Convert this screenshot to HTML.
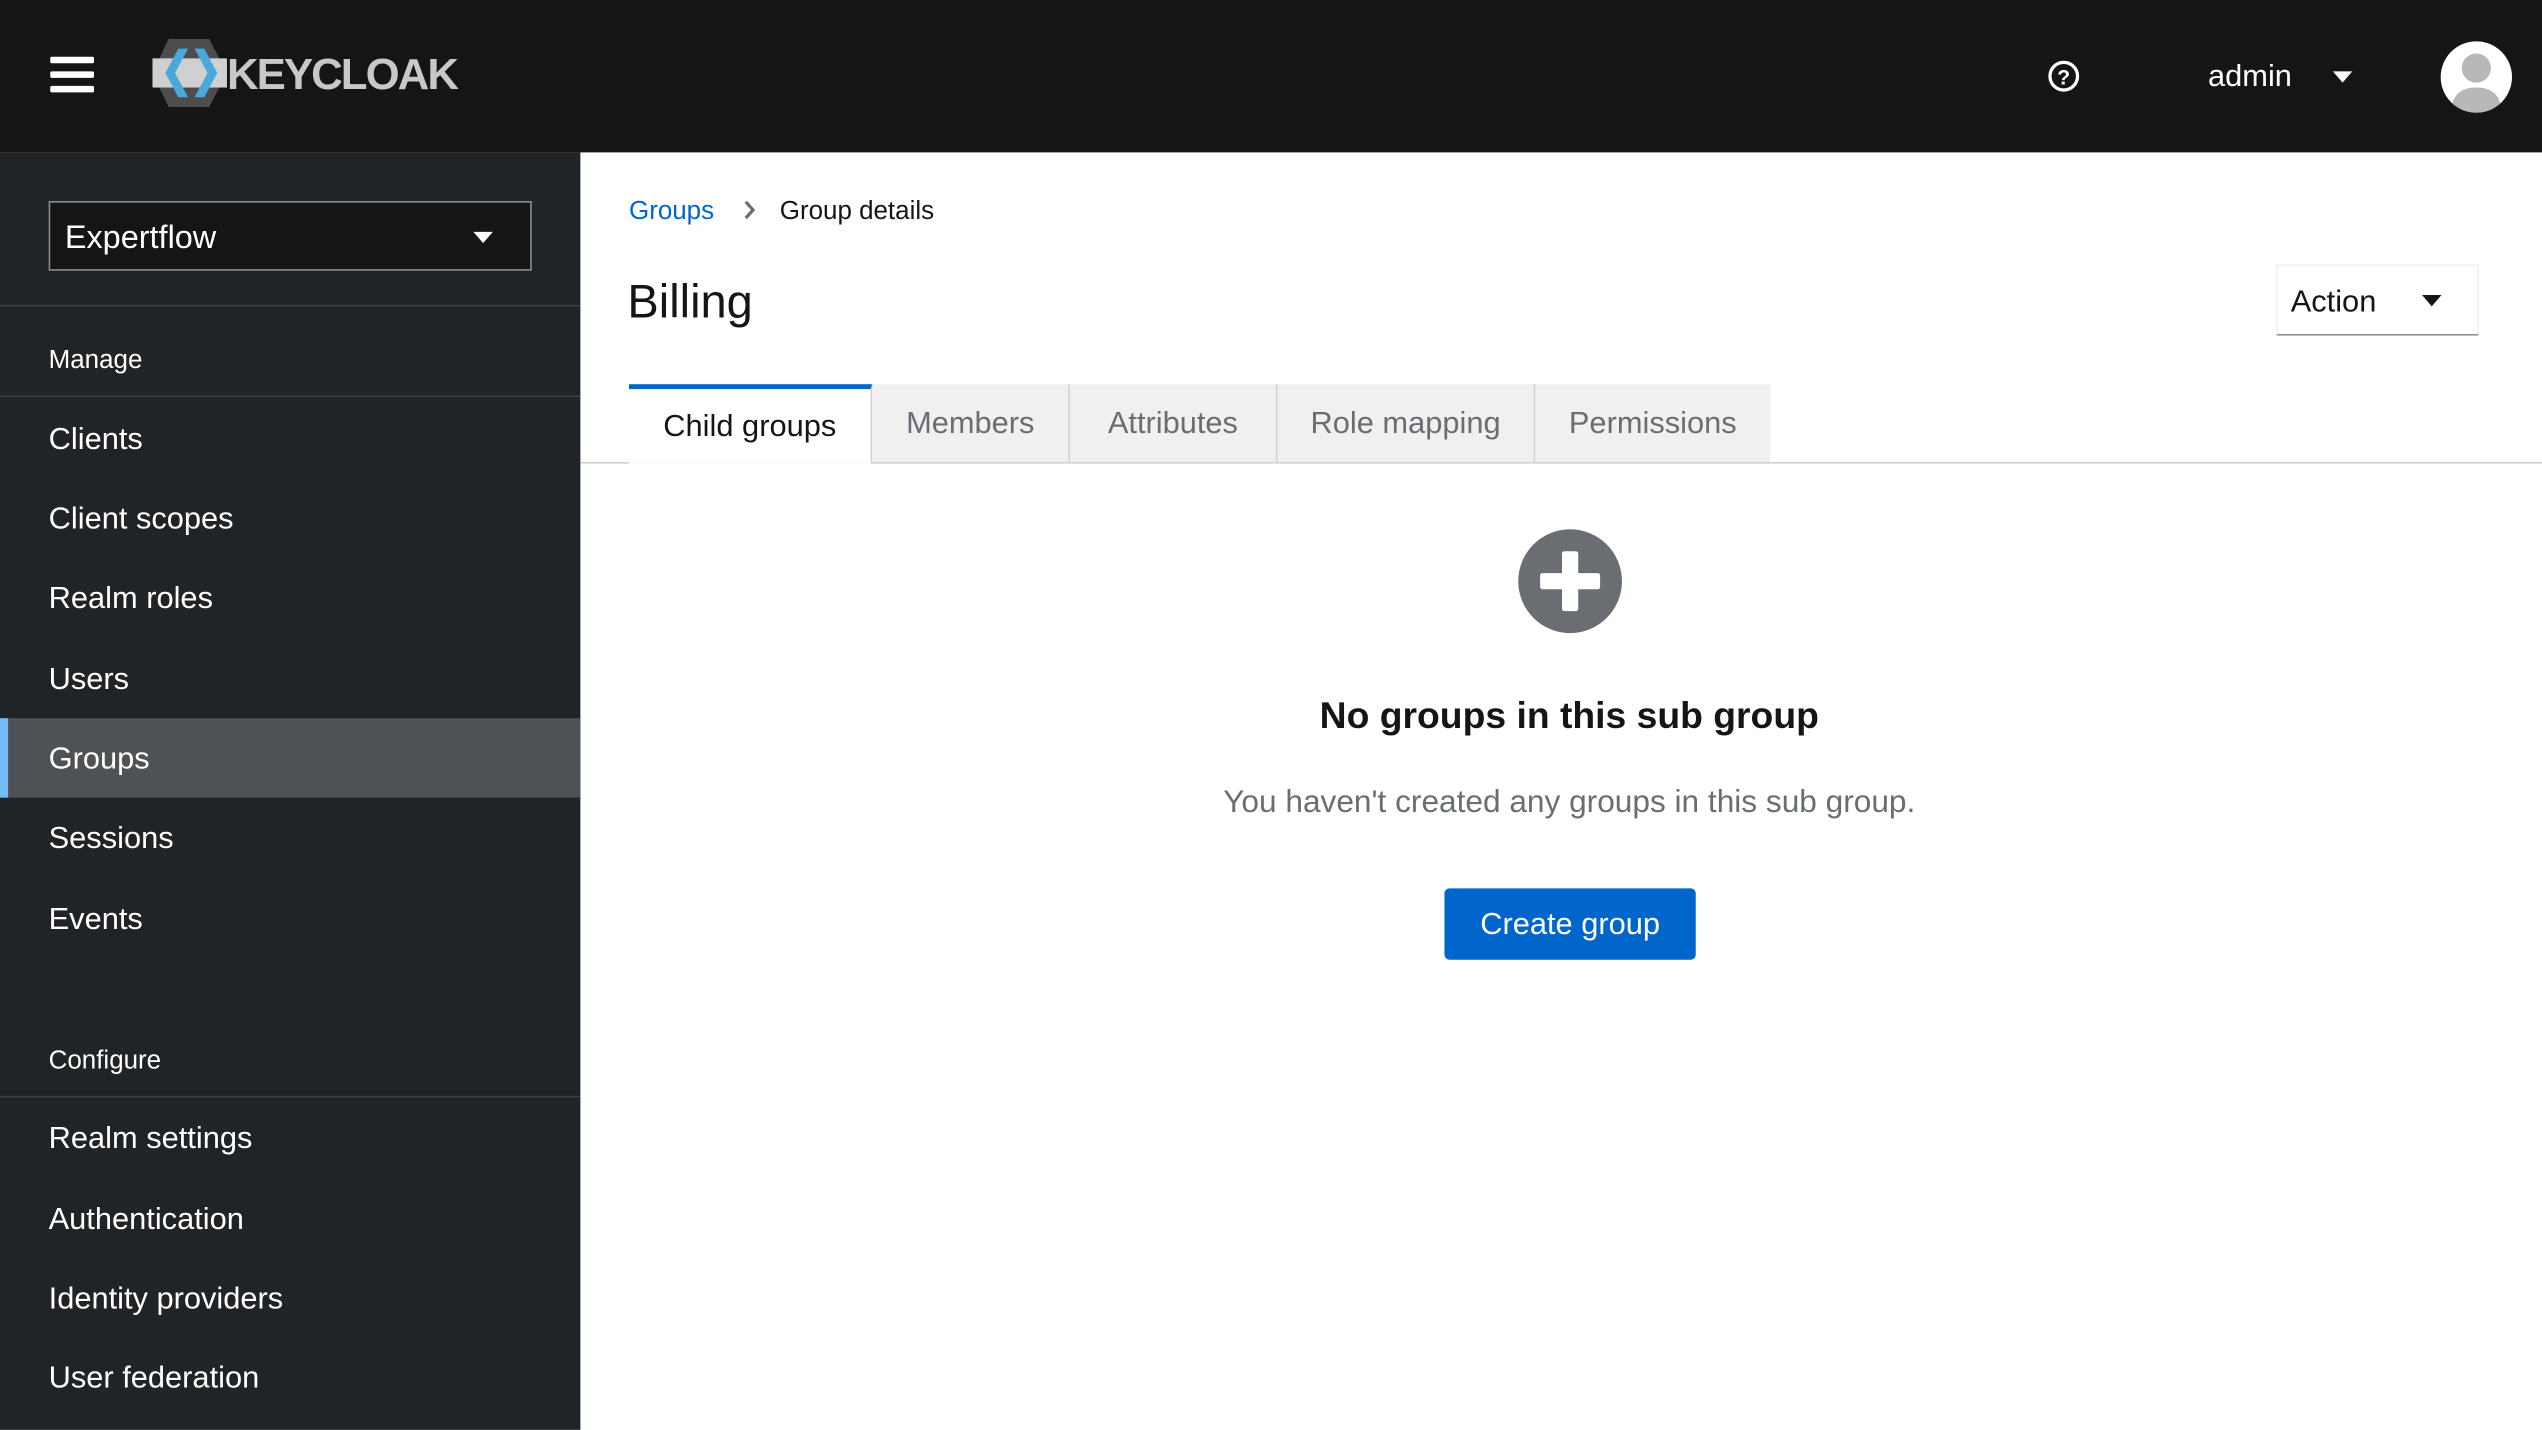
<!DOCTYPE html>
<html><head><meta charset="utf-8"><style>
html,body{margin:0;padding:0;width:2542px;height:1430px;overflow:hidden;background:#fff}
#s{position:absolute;left:0;top:0;width:1568px;height:882px;transform:scale(1.62117);transform-origin:0 0;font-family:"Liberation Sans",sans-serif}
.a{position:absolute;white-space:nowrap}
.hdr{left:0;top:0;width:1568px;height:94px;background:#151515}
.side{left:0;top:94px;width:358px;height:788px;background:#212427}
.nav{left:30px;color:#fff;font-size:19px;line-height:22px}
.sep{left:0;width:358px;height:1px;background:#3c3f42}
.tab{top:237px;height:48px;background:#f0f0f0;color:#6a6e73;font-size:19px;line-height:50px;text-align:center;border-right:1px solid #d2d2d2;box-sizing:border-box}
</style></head><body><div id="s">
<div class="a hdr"></div>
<div class="a" style="left:31px;top:35px;width:27px;height:4px;background:#fff;border-radius:1px"></div>
<div class="a" style="left:31px;top:44px;width:27px;height:4px;background:#fff;border-radius:1px"></div>
<div class="a" style="left:31px;top:53px;width:27px;height:4px;background:#fff;border-radius:1px"></div>
<svg class="a" style="left:94px;top:24px" width="60" height="42" viewBox="0 0 60 42">
<polygon points="10,0 35,0 46,21 35,42 10,42 0,21" fill="#4d4d4d"/>
<rect x="0" y="12" width="46" height="18" fill="#d0d0d0"/>
<polygon points="16,6 22,6 14,21 22,36 16,36 8,21" fill="#4aa8dc"/>
<polygon points="26,6 32,6 40,21 32,36 26,36 34,21" fill="#4aa8dc"/>
</svg>
<div class="a" style="left:140px;top:31px;font-size:27px;font-weight:bold;color:#c8c8c8;letter-spacing:-1.2px;line-height:30px">KEYCLOAK</div>
<svg class="a" style="left:1263px;top:37px" width="20" height="20" viewBox="0 0 20 20"><circle cx="10" cy="10" r="8.5" fill="none" stroke="#fff" stroke-width="2"/><text x="10" y="15" text-anchor="middle" font-size="13" font-weight="bold" fill="#fff" font-family="Liberation Sans">?</text></svg>
<div class="a" style="left:1362px;top:37px;color:#fff;font-size:19px;line-height:22px">admin</div>
<div class="a" style="left:1439px;top:44px;border-left:6px solid transparent;border-right:6px solid transparent;border-top:7px solid #fff"></div>
<svg class="a" style="left:1505px;top:25px" width="45" height="45" viewBox="0 0 45 45"><defs><clipPath id="c"><circle cx="22.5" cy="22.5" r="22"/></clipPath></defs><circle cx="22.5" cy="22.5" r="22" fill="#fff"/><g clip-path="url(#c)"><circle cx="22.5" cy="17" r="9" fill="#b8b8b8"/><path d="M7 45 Q7 29 22.5 29 Q38 29 38 45Z" fill="#b8b8b8"/></g></svg>

<div class="a side"></div>
<div class="a" style="left:30px;top:124px;width:298px;height:43px;background:#151515;border:1px solid #8a8d90;box-sizing:border-box"></div>
<div class="a" style="left:40px;top:136px;color:#fff;font-size:20px;line-height:22px">Expertflow</div>
<div class="a" style="left:292px;top:143px;border-left:6px solid transparent;border-right:6px solid transparent;border-top:7px solid #fff"></div>
<div class="a sep" style="top:188px"></div>
<div class="a nav" style="top:212px;font-size:16px">Manage</div>
<div class="a sep" style="top:244px"></div>
<div class="a nav" style="top:261px">Clients</div>
<div class="a nav" style="top:310px">Client scopes</div>
<div class="a nav" style="top:359px">Realm roles</div>
<div class="a nav" style="top:409px">Users</div>
<div class="a" style="left:0;top:443px;width:358px;height:49px;background:#4f5255"></div>
<div class="a" style="left:0;top:443px;width:5px;height:49px;background:#73bcf7"></div>
<div class="a nav" style="top:458px">Groups</div>
<div class="a nav" style="top:507px">Sessions</div>
<div class="a nav" style="top:557px">Events</div>
<div class="a nav" style="top:644px;font-size:16px">Configure</div>
<div class="a sep" style="top:676px"></div>
<div class="a nav" style="top:692px">Realm settings</div>
<div class="a nav" style="top:742px">Authentication</div>
<div class="a nav" style="top:791px">Identity providers</div>
<div class="a nav" style="top:840px">User federation</div>

<div class="a" style="left:388px;top:121px;font-size:16px;color:#0066cc;line-height:20px">Groups</div>
<svg class="a" style="left:457px;top:123px" width="10" height="13" viewBox="0 0 10 13"><path d="M3 1.5 L7.5 6.5 L3 11.5" fill="none" stroke="#6a6e73" stroke-width="2"/></svg>
<div class="a" style="left:481px;top:121px;font-size:16px;color:#151515;line-height:20px">Group details</div>
<div class="a" style="left:387px;top:170px;font-size:29px;color:#151515;line-height:34px">Billing</div>
<div class="a" style="left:1404px;top:163px;width:125px;height:44px;border:1px solid #f0f0f0;border-bottom-color:#8a8d90;box-sizing:border-box"></div>
<div class="a" style="left:1413px;top:176px;font-size:19px;color:#151515;line-height:22px">Action</div>
<div class="a" style="left:1494px;top:182px;border-left:6px solid transparent;border-right:6px solid transparent;border-top:7px solid #151515"></div>

<div class="a" style="left:358px;top:285px;width:1210px;height:1px;background:#d2d2d2"></div>
<div class="a tab" style="left:388px;width:150px;background:#fff;color:#151515;border-top:3px solid #0066cc;border-right:1px solid #d2d2d2;line-height:47px;height:49px">Child groups</div>
<div class="a tab" style="left:538px;width:122px">Members</div>
<div class="a tab" style="left:660px;width:128px">Attributes</div>
<div class="a tab" style="left:788px;width:159px">Role mapping</div>
<div class="a tab" style="left:947px;width:145px;border-right:none">Permissions</div>

<svg class="a" style="left:936px;top:326px" width="65" height="65" viewBox="0 0 65 65"><circle cx="32.5" cy="32.5" r="32" fill="#6a6e73"/><rect x="27.5" y="14" width="10" height="37" rx="1.5" fill="#fff"/><rect x="14" y="27.5" width="37" height="10" rx="1.5" fill="#fff"/></svg>
<div class="a" style="left:668px;width:600px;top:427px;text-align:center;font-size:23px;font-weight:bold;color:#151515;line-height:28px">No groups in this sub group</div>
<div class="a" style="left:618px;width:700px;top:484px;text-align:center;font-size:19.5px;color:#6a6e73;line-height:22px">You haven't created any groups in this sub group.</div>
<div class="a" style="left:891px;top:548px;width:155px;height:44px;background:#0066cc;border-radius:3px;color:#fff;font-size:19px;line-height:46px;text-align:center">Create group</div>
</div></body></html>
